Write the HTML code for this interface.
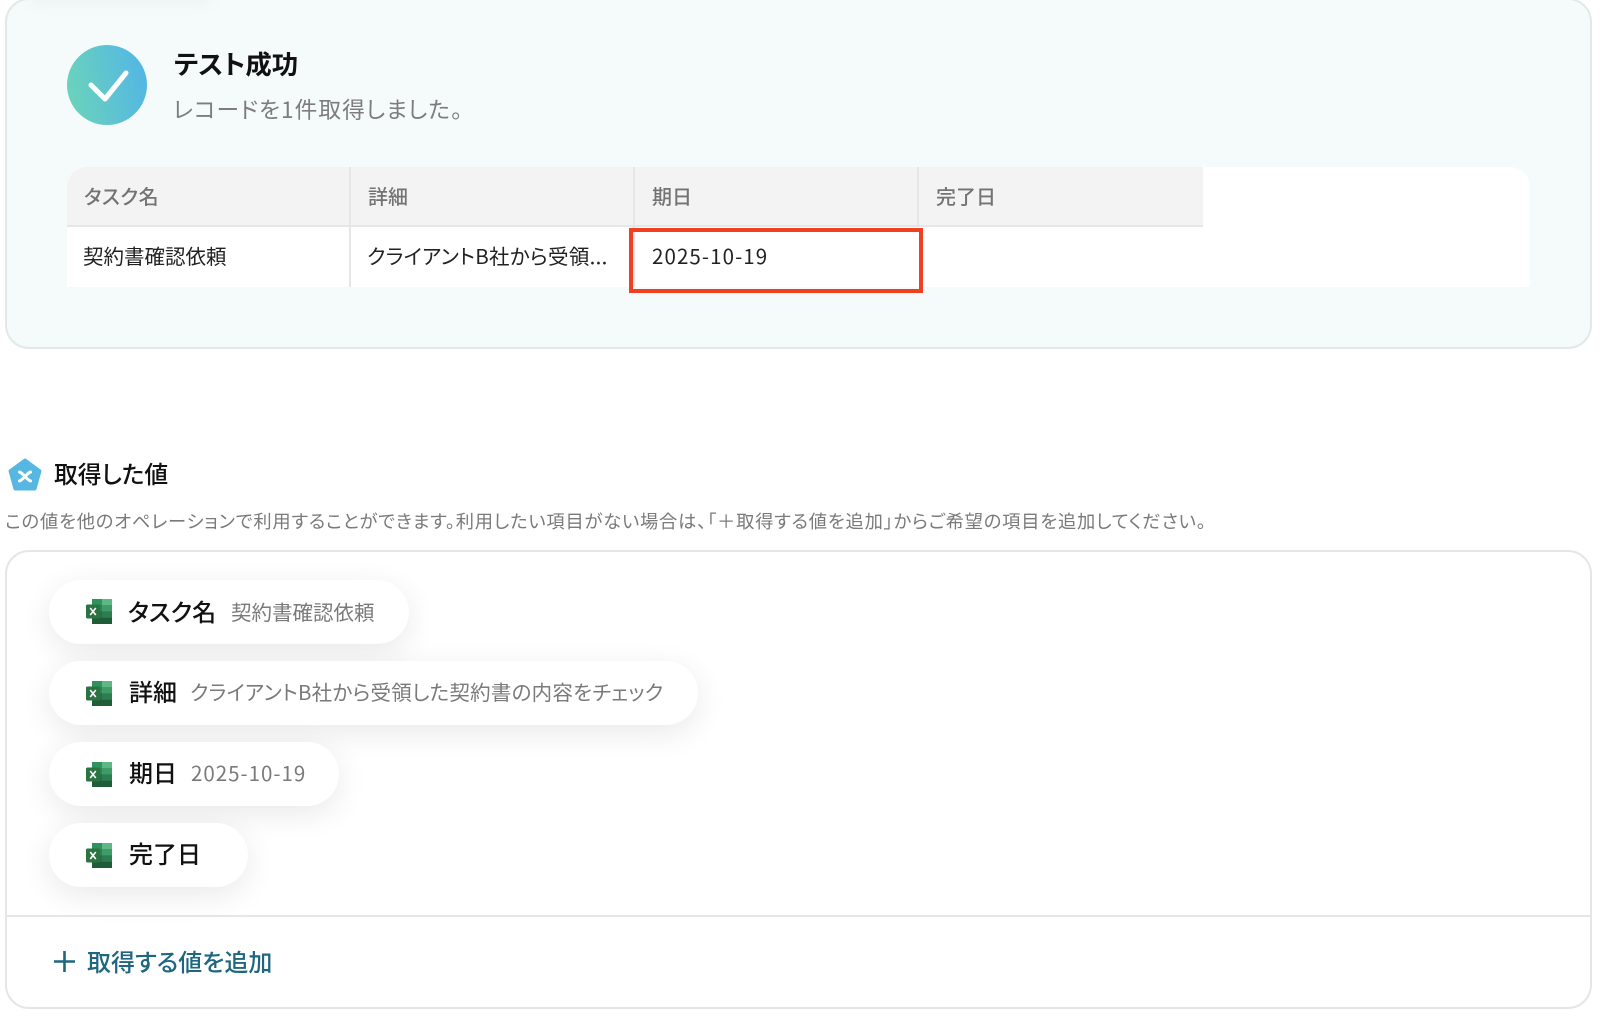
<!DOCTYPE html>
<html lang="ja">
<head>
<meta charset="utf-8">
<title>テスト成功</title>
<style>
html,body{margin:0;padding:0;background:#fff}
body{width:1600px;height:1014px;position:relative;overflow:hidden;font-family:"Noto Sans CJK JP","Liberation Sans",sans-serif;color:#111;font-feature-settings:"palt"}
.a{position:absolute;white-space:nowrap;line-height:1}
.box{position:absolute;box-sizing:border-box}
.pill{position:absolute;left:49px;height:64px;background:#fff;border-radius:32px;box-shadow:0 8px 32px rgba(0,0,0,.09)}
.th{position:absolute;top:0;height:60px;box-sizing:border-box;background:#f3f3f3;border-bottom:2px solid #e6e6e6;border-right:2px solid #e6e6e6}
.td{position:absolute;top:60px;height:60px;box-sizing:border-box;border-right:2px solid #e6e6e6}
.tht{font-size:20px;color:#737373;font-weight:500}
.tdt{font-size:20.5px;color:#222}
.lab{font-size:24px;font-weight:500;color:#111}
.val{font-size:20.5px;color:#7a7a7a}
</style>
</head>
<body>
<div class="box" style="left:5px;top:-2px;width:1587px;height:351px;background:#f5fbfb;border:2px solid #e3e8e8;border-radius:24px"></div>
<div class="a" style="left:30px;top:-10px;width:180px;height:14px;background:#eef1f1;filter:blur(6px);border-radius:8px"></div>

<svg class="box" style="left:67px;top:45px" width="80" height="80" viewBox="0 0 80 80">
<defs><linearGradient id="g" x1="0" y1="0.6" x2="1" y2="0.4"><stop offset="0" stop-color="#6bd3bb"/><stop offset="1" stop-color="#53b6e4"/></linearGradient></defs>
<circle cx="40" cy="40" r="40" fill="url(#g)"/>
<path d="M24 40 L38 54 L59 28" fill="none" stroke="#fff" stroke-width="5" stroke-linecap="round" stroke-linejoin="round"/>
</svg>
<div class="a" style="left:174px;top:50px;font-size:26.4px;font-weight:700">テスト成功</div>
<div class="a" style="left:173px;top:98px;font-size:22.7px;color:#7d7d7d;letter-spacing:1.05px">レコードを1件取得しました。</div>

<div class="box" style="left:67px;top:167px;width:1463px;height:120px;background:#fff;border-radius:20px 20px 0 0;overflow:hidden">
<div class="th" style="left:0;width:284px"></div>
<div class="th" style="left:284px;width:284px"></div>
<div class="th" style="left:568px;width:284px"></div>
<div class="th" style="left:852px;width:284px;border-right:0"></div>
<div class="td" style="left:0;width:284px"></div>
<div class="td" style="left:284px;width:284px"></div>
</div>
<div class="a tht" style="left:84px;top:186px;letter-spacing:.4px">タスク名</div>
<div class="a tht" style="left:368px;top:186px">詳細</div>
<div class="a tht" style="left:652px;top:186px">期日</div>
<div class="a tht" style="left:936px;top:186px">完了日</div>
<div class="a tdt" style="left:83px;top:245px">契約書確認依頼</div>
<div class="a tdt" style="left:367px;top:245px;letter-spacing:.3px">クライアントB社から受領...</div>
<div class="a tdt" style="left:652px;top:245px;letter-spacing:1.1px">2025-10-19</div>
<div class="box" style="left:628.5px;top:228px;width:294px;height:65px;border:4px solid #f04020"></div>

<svg class="box" style="left:8px;top:458px" width="34" height="34" viewBox="0 0 34 34">
<path d="M17 2 L32 13 L27 31 L7 31 L2 13 Z" fill="#56b7e3" stroke="#56b7e3" stroke-width="3" stroke-linejoin="round"/>
<path d="M11.5 14 C15 15 19 22 22.5 23 M22.5 14 C19 15 15 22 11.5 23" fill="none" stroke="#fff" stroke-width="3" stroke-linecap="round"/>
</svg>
<div class="a" style="left:54px;top:461px;font-size:23.8px;font-weight:500">取得した値</div>
<div class="a" style="left:5px;top:512px;font-size:18.3px;color:#7a7a7a;letter-spacing:.79px">この値を他のオペレーションで利用することができます。利用したい項目がない場合は、「＋取得する値を追加」からご希望の項目を追加してください。</div>

<div class="box" style="left:5px;top:550px;width:1587px;height:459px;background:#fff;border:2px solid #e6e6e6;border-radius:24px;overflow:hidden">
<div class="box" style="left:0;top:363px;width:100%;height:2px;background:#e6e6e6"></div>
</div>

<div class="pill" style="top:580px;width:360px"></div>
<div class="pill" style="top:661px;width:649px"></div>
<div class="pill" style="top:742px;width:290px"></div>
<div class="pill" style="top:823px;width:199px"></div>

<svg width="0" height="0" style="position:absolute"><defs>
<g id="x">
<rect x="6" y="0" width="20" height="25" rx="1.5" fill="#2f8f5a"/>
<rect x="16" y="0" width="10" height="6.2" fill="#5fb884"/>
<rect x="16" y="6.2" width="10" height="6.2" fill="#3f9c6a"/>
<rect x="6" y="0" width="10" height="6.2" fill="#2d9460"/>
<rect x="6" y="6.2" width="10" height="6.2" fill="#2a8454"/>
<rect x="6" y="12.4" width="10" height="6.3" fill="#256f46"/>
<rect x="16" y="12.4" width="10" height="6.3" fill="#2d7d50"/>
<rect x="6" y="18.7" width="20" height="6.3" fill="#1f5c38"/>
<rect x="0" y="5.5" width="14" height="14" rx="1.5" fill="#2b7340"/>
<path d="M4.2 9 L9.8 16 M9.8 9 L4.2 16" stroke="#fff" stroke-width="1.6"/>
</g>
</defs></svg>
<svg class="box" style="left:86px;top:599px" width="26" height="25"><use href="#x"/></svg>
<svg class="box" style="left:86px;top:681px" width="26" height="25"><use href="#x"/></svg>
<svg class="box" style="left:86px;top:762px" width="26" height="25"><use href="#x"/></svg>
<svg class="box" style="left:86px;top:843px" width="26" height="25"><use href="#x"/></svg>

<div class="a lab" style="left:128px;top:599px">タスク名</div>
<div class="a val" style="left:231px;top:601px">契約書確認依頼</div>
<div class="a lab" style="left:129px;top:679px">詳細</div>
<div class="a val" style="left:190px;top:681px;letter-spacing:.25px">クライアントB社から受領した契約書の内容をチェック</div>
<div class="a lab" style="left:129px;top:760px">期日</div>
<div class="a val" style="left:191px;top:762px;letter-spacing:1px">2025-10-19</div>
<div class="a lab" style="left:129px;top:841px">完了日</div>

<svg class="box" style="left:53px;top:950px" width="23" height="23" viewBox="0 0 23 23"><path d="M11.5 1 V22 M1 11.5 H22" stroke="#1f6680" stroke-width="2.6" fill="none"/></svg>
<div class="a" style="left:87px;top:949px;font-size:24px;font-weight:500;color:#1f6680">取得する値を追加</div>
</body>
</html>
